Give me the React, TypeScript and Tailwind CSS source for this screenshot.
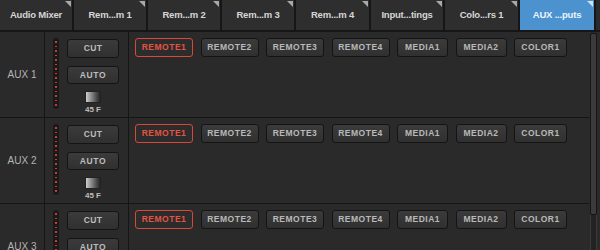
import React from "react";

const tabs = [
  { label: "Audio Mixer", w: "w-[72px]" },
  { label: "Rem...m 1", w: "w-[72px]" },
  { label: "Rem...m 2", w: "w-[72px]" },
  { label: "Rem...m 3", w: "w-[72px]" },
  { label: "Rem...m 4", w: "w-[73px]" },
  { label: "Input...tings", w: "w-[72px]" },
  { label: "Colo...rs 1", w: "w-[73px]" },
  { label: "AUX ...puts", w: "w-[74px]", active: true },
];

const sources = [
  { label: "REMOTE1", w: "w-[58px]", active: true },
  { label: "REMOTE2", w: "w-[58px]" },
  { label: "REMOTE3", w: "w-[58px]" },
  { label: "REMOTE4", w: "w-[58px]" },
  { label: "MEDIA1", w: "w-[51px]" },
  { label: "MEDIA2", w: "w-[51px]" },
  { label: "COLOR1", w: "w-[53px]" },
];

function Meter() {
  return (
    <div className="w-[6px] h-[71px] rounded-full bg-[#1a1a1a] flex flex-col items-center justify-between py-[3px]">
      {Array.from({ length: 15 }).map((_, i) => (
        <div key={i} className="w-[1.5px] h-[1.5px] bg-[#c83a2d]" />
      ))}
    </div>
  );
}

function Row({ name }: { name: string }) {
  return (
    <div className="flex h-[86px] border-b border-[#151515] shrink-0">
      <div className="w-[45px] border-r border-[#151515] flex items-center justify-center text-[10px] text-[#b4b4b4]">
        {name}
      </div>
      <div className="w-[84px] border-r border-[#151515] flex pl-[8px] pt-[6px]">
        <Meter />
        <div className="ml-[8px] w-[52px] flex flex-col items-center">
          <div className="mt-[1px] w-[52px] h-[19px] rounded-[3px] border border-[#141414] bg-gradient-to-b from-[#3b3b3b] to-[#303030] flex items-center justify-center text-[8.5px] font-bold text-[#bdbdbd] tracking-[0.3px]">
            CUT
          </div>
          <div className="mt-[8px] w-[52px] h-[18px] rounded-[3px] border border-[#141414] bg-gradient-to-b from-[#3b3b3b] to-[#303030] flex items-center justify-center text-[8.5px] font-bold text-[#bdbdbd] tracking-[0.6px]">
            AUTO
          </div>
          <div className="mt-[7px] w-[16px] h-[12px] border border-[#222] bg-gradient-to-r from-[#cfcfcf] to-[#262626]" />
          <div className="mt-[2px] text-[8px] leading-[9px] font-bold text-[#bdbdbd]">45 F</div>
        </div>
      </div>
      <div className="flex-1 flex items-start pl-[6px] pt-[6px] gap-[7.5px]">
        {sources.map((s) => (
          <div
            key={s.label}
            className={
              s.active
                ? `${s.w} h-[19px] rounded-[3px] border border-[#d6483a] bg-[#2c2c2c] flex items-center justify-center text-[8.5px] font-bold text-[#e25444] tracking-[0.5px]`
                : `${s.w} h-[19px] rounded-[3px] border border-[#141414] bg-gradient-to-b from-[#3b3b3b] to-[#303030] flex items-center justify-center text-[8.5px] font-bold text-[#b9b9b9] tracking-[0.5px]`
            }
          >
            {s.label}
          </div>
        ))}
      </div>
    </div>
  );
}

export default function App() {
  return (
    <div className="w-[600px] h-[250px] overflow-hidden bg-[#2a2a2a] font-['Liberation_Sans',Arial,sans-serif] flex flex-col">
      <div className="flex h-[32px] shrink-0 gap-[2px] bg-[#161616] border-b-2 border-[#161616]">
        {tabs.map((t) => (
          <div
            key={t.label}
            className={`${t.w} relative flex items-center justify-center text-[9.5px] font-bold tracking-[-0.2px] ${
              t.active ? "bg-[#4b92cf] text-[#eef4fa]" : "bg-[#2e2e2e] text-[#d6d6d6]"
            }`}
          >
            {t.label}
            <div
              className={`absolute top-[1px] right-[1px] w-0 h-0 border-l-[6px] border-l-transparent border-t-[6px] ${
                t.active ? "border-t-[#d0e2f2]" : "border-t-[#a9a9a9]"
              }`}
            />
          </div>
        ))}
        <div className="flex-1 bg-[#2a2a2a]" />
      </div>
      <div className="flex flex-1 min-h-0">
        <div className="w-[589px] flex flex-col">
          <Row name="AUX 1" />
          <Row name="AUX 2" />
          <Row name="AUX 3" />
        </div>
        <div className="w-[11px] pl-[1px] pr-[3px] pt-[1px] flex flex-col">
          <div className="w-[7px] h-[182px] rounded-[2px] border border-[#151515] bg-[#3b3b3b]" />
          <div className="w-[7px] flex-1 border-x border-[#3a3a3a] bg-[#222]" />
        </div>
      </div>
    </div>
  );
}
